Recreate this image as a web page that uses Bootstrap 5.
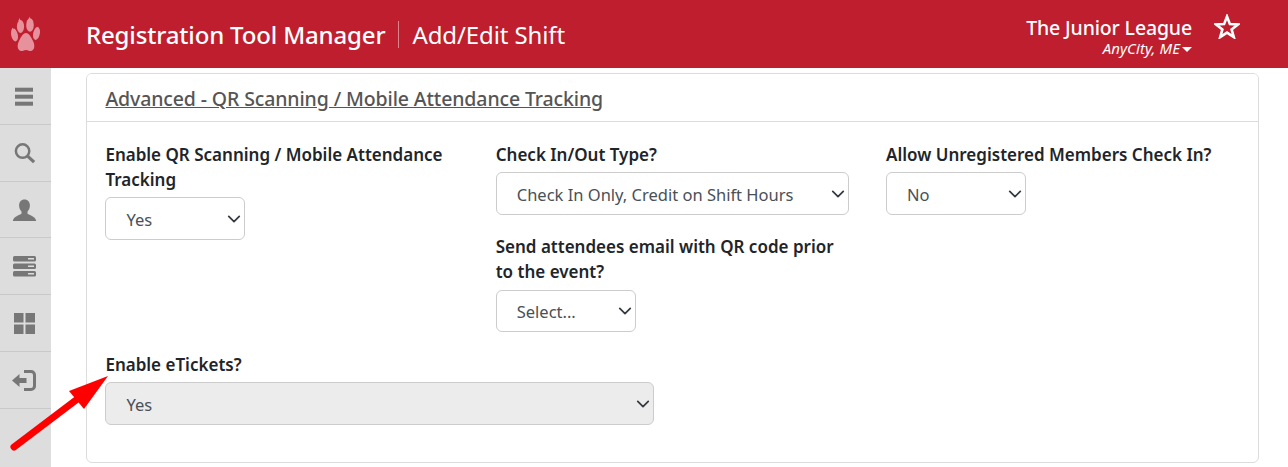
<!DOCTYPE html>
<html lang="en">
<head>
  <meta charset="UTF-8">
  <title>Registration Tool Manager - Add/Edit Shift</title>
  <link href="https://cdn.jsdelivr.net/npm/bootstrap@5.3.0/dist/css/bootstrap.min.css" rel="stylesheet">
  <style>
    html, body {
      height: 467px;
      overflow: hidden;
    }
    body {
      font-family: "Noto Sans", "Open Sans", sans-serif;
      background: #fff;
      color: #212529;
    }
    .top-bar {
      height: 68px;
      background: #be1e2d;
      color: #fff;
    }
    .logo-box {
      width: 51px;
    }
    .app-title {
      margin-left: 35px;
      font-size: 24px;
      font-weight: 500;
      letter-spacing: -0.16px;
      padding-right: 13px;
      line-height: 27px;
      border-right: 1px solid rgba(255, 255, 255, .45);
    }
    .page-title {
      margin-left: 13px;
      font-size: 24px;
      letter-spacing: -0.1px;
      line-height: 27px;
    }
    .title-wrap {
      padding-top: 1px;
    }
    .org-box {
      text-align: right;
      margin-right: 22px;
      margin-top: 7px;
    }
    .org-name {
      font-size: 19.5px;
      font-weight: 500;
      letter-spacing: -0.15px;
      line-height: 22px;
    }
    .org-city {
      font-size: 15px;
      font-style: italic;
      letter-spacing: 0.1px;
      line-height: 19px;
    }
    .caret-down {
      display: inline-block;
      border: 5px solid transparent;
      border-top-color: #fff;
      border-bottom: 0;
      vertical-align: 2px;
      margin-left: 2px;
    }
    .star-box {
      margin-right: 48px;
      margin-top: -17px;
    }
    .side-bar {
      width: 51px;
      height: 399px;
      background: #ddd;
    }
    .side-item {
      height: 56.8px;
      padding-right: 3px;
      border-bottom: 1px solid #c9c9c9;
    }
    .main-area {
      padding: 5px 29px 0 35px;
    }
    .panel-card {
      height: 390px;
      border-color: #dcdcdc;
    }
    .panel-head {
      height: 48px;
      padding: 2px 18.4px 0;
      background: #fff;
      border-color: #dcdcdc;
    }
    .panel-head a {
      color: #555;
      font-size: 19.5px;
      font-weight: 500;
      letter-spacing: -0.12px;
    }
    .panel-body {
      padding: 20px 0 0;
    }
    .field-col {
      padding: 0 18.8px 0 18.4px;
    }
    .field-label {
      display: block;
      font-size: 17px;
      font-weight: 600;
      line-height: 25px;
      margin: 0 0 5px;
      color: #212529;
    }
    .gap-label {
      margin-top: 19px;
      margin-bottom: 6px;
    }
    .gap-row {
      margin-top: 20px;
    }
    .field-select {
      height: 43px;
      font-size: 16.5px;
      color: #495057;
      padding-top: 8px;
      padding-bottom: 4px;
      padding-left: 20px;
      border-color: #ccc;
      background-position: right 3px center;
      background-size: 14px 14px;
    }
    .field-select:disabled {
      background-color: #ececec;
    }
    .select-short {
      height: 42px;
      padding-top: 7px;
      padding-bottom: 5px;
    }
    .w-narrow {
      width: 140px;
    }
    .w-wide {
      width: 549px;
    }
    .arrow-mark {
      position: absolute;
      left: 0;
      top: 360px;
    }
  </style>
</head>
<body>

  <div class="top-bar d-flex align-items-center">
    <div class="logo-box d-flex justify-content-center">
      <svg width="30" height="36" viewBox="10 16 30 36" fill="#e6919c">
        <path d="M25 33c3 0 5 4 7 8 2 4 2 9-2 10-2 .3-3-1-5-1s-3 1.300-5 1c-4-1-4-6-2-10 2-4 4-8 7-8z"/>
        <ellipse cx="19.500" cy="26.500" rx="3.600" ry="6.500"/>
        <ellipse cx="29" cy="25" rx="3.800" ry="6.800"/>
        <ellipse cx="13.500" cy="35" rx="3.300" ry="6.500" transform="rotate(-12 13.500 35)"/>
        <ellipse cx="35.500" cy="33.500" rx="3.300" ry="6.500" transform="rotate(12 35.500 33.500)"/>
        <path d="M28.500 16.500l1 3h-2zM18.500 18l1.200 3h-2.400zM11.500 27.500l1.200 3h-2.400zM37 26.500l1 3h-2.400z"/>
      </svg>
    </div>
    <div class="title-wrap d-flex align-items-center">
      <div class="app-title">Registration Tool Manager</div>
      <div class="page-title">Add/Edit Shift</div>
    </div>
    <div class="ms-auto org-box">
      <div class="org-name">The Junior League</div>
      <div class="org-city">AnyCity, ME<span class="caret-down"></span></div>
    </div>
    <div class="star-box">
      <svg width="26" height="25" viewBox="0 0 26 25" fill="none" stroke="#fff" stroke-width="2.600">
        <path d="M13 2.500l2.900 7.600 8 .3-6.300 5 2.200 7.700L13 18.600l-6.800 4.500 2.200-7.700-6.300-5 8-.3z"/>
      </svg>
    </div>
  </div>

  <div class="d-flex">
    <div class="side-bar flex-shrink-0">
      <div class="side-item d-flex align-items-center justify-content-center">
        <svg width="20" height="20" viewBox="0 -0.7 20 20" fill="#777"><rect x="1" y="1" width="18" height="4"/><rect x="1" y="8" width="18" height="4"/><rect x="1" y="15" width="18" height="4"/></svg>
      </div>
      <div class="side-item d-flex align-items-center justify-content-center">
        <svg width="23" height="23" viewBox="0 -1 23 24" fill="none" stroke="#777"><circle cx="9.500" cy="9.500" r="7" stroke-width="2.600"/><path d="M14.500 14.500l7 6.500" stroke-width="3.400"/></svg>
      </div>
      <div class="side-item d-flex align-items-center justify-content-center">
        <svg width="23" height="23" viewBox="0 -1.500 23 23" fill="#777"><path d="M11.500 0c3.400 0 5.400 2.600 5.400 6 0 2.600-1 4.600-2.400 6v2.200c2 1.200 7 2.400 8.500 6.300V22H0v-1.500c1.500-3.900 6.500-5.100 8.500-6.300V12C7.100 10.600 6.100 8.600 6.100 6c0-3.400 2-6 5.400-6z"/></svg>
      </div>
      <div class="side-item d-flex align-items-center justify-content-center">
        <svg width="23" height="21" viewBox="0 0 23 21" fill="#777"><rect y="0" width="23" height="5.500" rx="1.500"/><rect y="7.500" width="23" height="5.500" rx="1.500"/><rect y="15" width="23" height="5.500" rx="1.500"/><path d="M15 2h6v1.500h-6zM15 9.500h6V11h-6zM15 17h6v1.500h-6z" fill="#ddd"/></svg>
      </div>
      <div class="side-item d-flex align-items-center justify-content-center">
        <svg width="21" height="21" viewBox="0 0 21 21" fill="#777"><rect width="9.500" height="9.500"/><rect x="11.500" width="9.500" height="9.500"/><rect y="11.500" width="9.500" height="9.500"/><rect x="11.500" y="11.500" width="9.500" height="9.500"/></svg>
      </div>
      <div class="side-item d-flex align-items-center justify-content-center">
        <svg width="24" height="22" viewBox="0 -1 24 22" fill="#777"><path d="M0 10.500L7.500 4v4h7v5h-7v4z"/><path d="M12 1.500h7c2 0 3.500 1.500 3.500 3.500v11c0 2-1.500 3.500-3.500 3.500h-7" fill="none" stroke="#777" stroke-width="3"/></svg>
      </div>
    </div>

    <div class="main-area flex-grow-1">
      <div class="card panel-card">
        <div class="card-header panel-head d-flex align-items-center">
          <a href="#">Advanced - QR Scanning / Mobile Attendance Tracking</a>
        </div>
        <div class="card-body panel-body">
          <div class="row g-0">
            <div class="col-4 field-col">
              <label class="field-label">Enable QR Scanning / Mobile Attendance Tracking</label>
              <select class="form-select field-select w-narrow"><option>Yes</option></select>
            </div>
            <div class="col-4 field-col">
              <label class="field-label">Check In/Out Type?</label>
              <select class="form-select field-select"><option>Check In Only, Credit on Shift Hours</option></select>
              <label class="field-label gap-label">Send attendees email with QR code prior to the event?</label>
              <select class="form-select field-select select-short w-narrow"><option>Select...</option></select>
            </div>
            <div class="col-4 field-col">
              <label class="field-label">Allow Unregistered Members Check In?</label>
              <select class="form-select field-select w-narrow"><option>No</option></select>
            </div>
          </div>
          <div class="field-col gap-row">
            <label class="field-label">Enable eTickets?</label>
            <select class="form-select field-select w-wide" disabled><option>Yes</option></select>
          </div>
        </div>
      </div>
    </div>
  </div>

  <svg class="arrow-mark" width="120" height="100" viewBox="0 360 120 100">
    <path d="M14 447L88 391" stroke="#ff0000" stroke-width="7" stroke-linecap="round"/>
    <path d="M108 376L69 391 84 409z" fill="#ff0000"/>
  </svg>

  <script src="https://cdn.jsdelivr.net/npm/bootstrap@5.3.0/dist/js/bootstrap.bundle.min.js"></script>
</body>
</html>
